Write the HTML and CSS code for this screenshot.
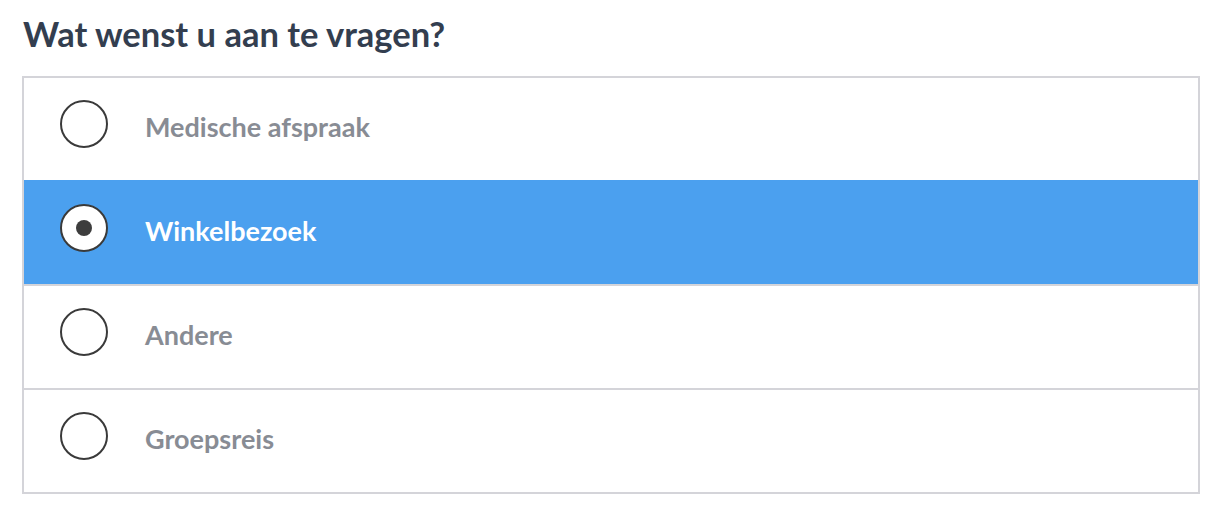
FILE: index.html
```html
<!DOCTYPE html>
<html lang="nl">
<head>
    <meta charset="UTF-8" />
    <title>Aanvraag</title>
    <link rel="stylesheet" href="styles.css">
</head>
<body>
    <div class="request">
        <h2 class="request-title">Wat wenst u aan te vragen?</h2>
        <ul class="choices">
            <li class="choice"><span class="radio"></span><span class="label">Medische afspraak</span></li>
            <li class="choice selected"><span class="radio"></span><span class="label">Winkelbezoek</span></li>
            <li class="choice"><span class="radio"></span><span class="label">Andere</span></li>
            <li class="choice"><span class="radio"></span><span class="label">Groepsreis</span></li>
        </ul>
    </div>
</body>
</html>
```

FILE: styles.css
```css
* {
    margin: 0;
    padding: 0;
    box-sizing: border-box;
}

body {
    font-family: Lato, "Noto Sans", sans-serif;
    background-color: #fff;
}

li {
    list-style: none;
}

.request {
    padding: 14px 24px 0 22px;
}

.request-title {
    font-size: 34.5px;
    font-weight: 700;
    color: #333e4f;
    line-height: 40px;
    padding-left: 1px;
    margin-bottom: 22px;
}

.choices {
    border: 2px solid #d4d4d9;
}

.choice {
    display: flex;
    align-items: center;
    height: 102px;
    padding: 0 0 10px 36px;
}

.choice + .choice {
    height: 104px;
    border-top: 2px solid #d4d4d9;
}

.choice.selected {
    background-color: #4ba0ef;
    border-top-color: #4ba0ef;
}

.radio {
    display: flex;
    align-items: center;
    justify-content: center;
    width: 48px;
    height: 48px;
    border: 2px solid #3a3a3a;
    border-radius: 50%;
    background-color: #fff;
}

.selected .radio::after {
    content: "";
    width: 16px;
    height: 16px;
    border-radius: 50%;
    background-color: #3d3d3d;
}

.label {
    margin-left: 37px;
    font-size: 27px;
    font-weight: 700;
    color: #888c94;
    position: relative;
    top: 2px;
}

.selected .label {
    color: #fff;
}
```
